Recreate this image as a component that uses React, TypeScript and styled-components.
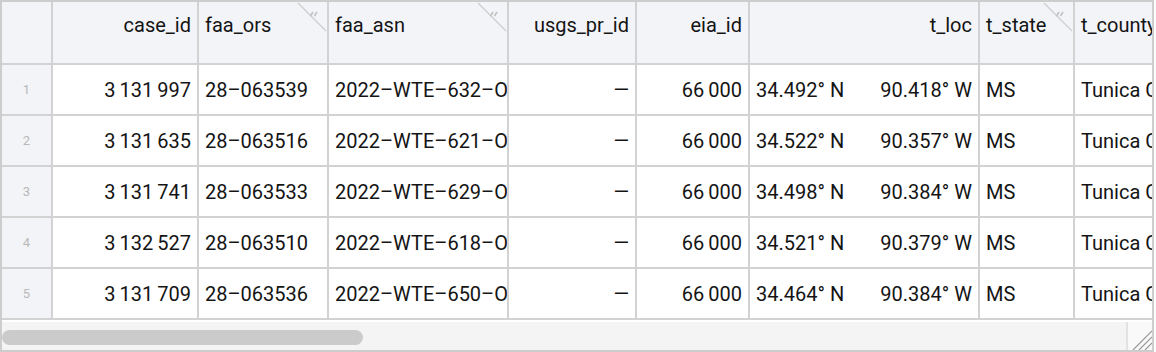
import styled, { createGlobalStyle } from 'styled-components';

const GlobalStyle = createGlobalStyle`
  html, body {
    margin: 0;
    padding: 0;
    background: #ffffff;
  }
`;

const GRID_LINE = '#d2d2d2';
const HEADER_BG = '#f3f4f8';

type Align = 'left' | 'right';

interface Column {
  key: string;
  width: number;
  align: Align;
  mark?: boolean;
}

const COLUMNS: Column[] = [
  { key: 'case_id', width: 146, align: 'right' },
  { key: 'faa_ors', width: 130, align: 'left', mark: true },
  { key: 'faa_asn', width: 180, align: 'left', mark: true },
  { key: 'usgs_pr_id', width: 128, align: 'right' },
  { key: 'eia_id', width: 113, align: 'right' },
  { key: 't_loc', width: 230, align: 'right' },
  { key: 't_state', width: 95, align: 'left', mark: true },
  { key: 't_county', width: 200, align: 'left' },
];

const TEMPLATE = `51px ${COLUMNS.map((c) => `${c.width}px`).join(' ')}`;

const Frame = styled.div`
  width: 1154px;
  height: 352px;
  box-sizing: border-box;
  border: 2px solid #cdcdcd;
  display: flex;
  flex-direction: column;
  font-family: Roboto, 'Noto Sans', sans-serif;
  color: #141414;
`;

const Viewport = styled.div`
  flex: 1;
  overflow: hidden;
`;

const Row = styled.div`
  display: grid;
  grid-template-columns: ${TEMPLATE};
  width: max-content;
`;

const HeaderCell = styled.div<{ $align: Align }>`
  position: relative;
  box-sizing: border-box;
  height: 63px;
  padding: 10px 6px 0;
  background: ${HEADER_BG};
  border-right: 2px solid ${GRID_LINE};
  border-bottom: 2px solid ${GRID_LINE};
  text-align: ${(p) => p.$align};
  font-size: 20px;
  line-height: 26px;
  white-space: nowrap;
  overflow: hidden;
`;

const ResizeMark = styled.svg`
  position: absolute;
  top: 0;
  right: 0;
  width: 30px;
  height: 30px;
`;

const IndexCell = styled.div`
  box-sizing: border-box;
  height: 51px;
  background: ${HEADER_BG};
  border-right: 2px solid ${GRID_LINE};
  border-bottom: 2px solid ${GRID_LINE};
  display: flex;
  align-items: center;
  justify-content: center;
  font-size: 13px;
  color: #b8b8b8;
`;

const Cell = styled.div<{ $align: Align }>`
  box-sizing: border-box;
  height: 51px;
  padding: 0 6px;
  background: #ffffff;
  border-right: 2px solid ${GRID_LINE};
  border-bottom: 2px solid ${GRID_LINE};
  display: flex;
  align-items: center;
  justify-content: ${(p) => (p.$align === 'right' ? 'flex-end' : 'flex-start')};
  font-size: 20px;
  white-space: nowrap;
  overflow: hidden;
`;

const LocCell = styled(Cell)`
  justify-content: space-between;
`;

const ScrollArea = styled.div`
  height: 28px;
  flex: none;
  display: flex;
  background: #f4f4f4;
`;

const Track = styled.div`
  flex: 1;
  padding-top: 8px;
`;

const Thumb = styled.div`
  width: 361px;
  height: 15px;
  border-radius: 8px;
  background: #cbcbcb;
`;

const Grip = styled.div`
  width: 24px;
  flex: none;
  border-left: 2px solid #e2e2e2;
  background: #f9f9f9;
  display: flex;
  align-items: flex-end;
  justify-content: flex-end;
`;

const HEADER_MARK = (
  <ResizeMark viewBox="0 0 30 30">
    <line x1="1" y1="1" x2="29" y2="29" stroke="#cfcfcf" strokeWidth="1.5" />
    <line x1="13.5" y1="14" x2="16" y2="10" stroke="#c2c2c2" strokeWidth="1.6" />
    <line x1="17.5" y1="14" x2="20" y2="10" stroke="#c2c2c2" strokeWidth="1.6" />
  </ResizeMark>
);

interface Record {
  caseId: string;
  ors: string;
  asn: string;
  lat: string;
  lon: string;
}

const TS = '\u2009';

const ROWS: Record[] = [
  { caseId: `3${TS}131${TS}997`, ors: '28–063539', asn: '2022–WTE–632–OE', lat: '34.492° N', lon: '90.418° W' },
  { caseId: `3${TS}131${TS}635`, ors: '28–063516', asn: '2022–WTE–621–OE', lat: '34.522° N', lon: '90.357° W' },
  { caseId: `3${TS}131${TS}741`, ors: '28–063533', asn: '2022–WTE–629–OE', lat: '34.498° N', lon: '90.384° W' },
  { caseId: `3${TS}132${TS}527`, ors: '28–063510', asn: '2022–WTE–618–OE', lat: '34.521° N', lon: '90.379° W' },
  { caseId: `3${TS}131${TS}709`, ors: '28–063536', asn: '2022–WTE–650–OE', lat: '34.464° N', lon: '90.384° W' },
];

export default function App() {
  return (
    <>
      <GlobalStyle />
      <Frame>
        <Viewport>
          <Row>
            <HeaderCell $align="left" />
            {COLUMNS.map((col) => (
              <HeaderCell key={col.key} $align={col.align}>
                {col.key}
                {col.mark && HEADER_MARK}
              </HeaderCell>
            ))}
          </Row>
          {ROWS.map((r, i) => (
            <Row key={i}>
              <IndexCell>{i + 1}</IndexCell>
              <Cell $align="right">{r.caseId}</Cell>
              <Cell $align="left">{r.ors}</Cell>
              <Cell $align="left">{r.asn}</Cell>
              <Cell $align="right">—</Cell>
              <Cell $align="right">{`66${TS}000`}</Cell>
              <LocCell $align="right">
                <span>{r.lat}</span>
                <span>{r.lon}</span>
              </LocCell>
              <Cell $align="left">MS</Cell>
              <Cell $align="left">Tunica County</Cell>
            </Row>
          ))}
        </Viewport>
        <ScrollArea>
          <Track>
            <Thumb />
          </Track>
          <Grip>
            <svg width="22" height="20" viewBox="0 0 22 20">
              <line x1="3" y1="20" x2="22" y2="1" stroke="#9a9a9a" strokeWidth="1.2" />
              <line x1="9" y1="20" x2="22" y2="7" stroke="#9a9a9a" strokeWidth="1.2" />
              <line x1="15" y1="20" x2="22" y2="13" stroke="#9a9a9a" strokeWidth="1.2" />
            </svg>
          </Grip>
        </ScrollArea>
      </Frame>
    </>
  );
}
